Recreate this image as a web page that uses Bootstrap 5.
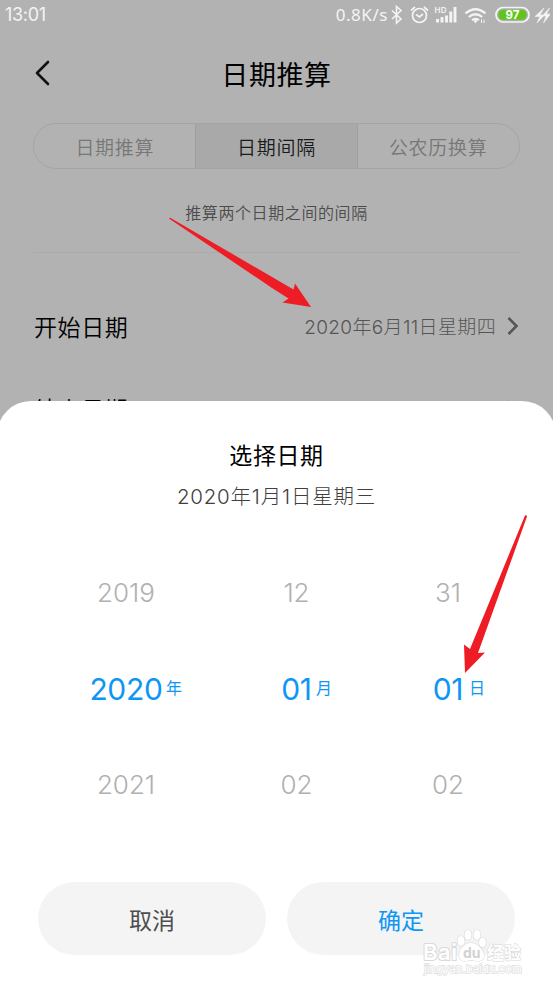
<!DOCTYPE html>
<html lang="zh-CN">
<head>
<meta charset="utf-8">
<meta name="viewport" content="width=device-width, initial-scale=1">
<title>日期推算</title>
<link href="https://cdn.jsdelivr.net/npm/bootstrap@5.3.0/dist/css/bootstrap.min.css" rel="stylesheet">
<style>
  body { font-family: Inter, "Noto Sans CJK SC", sans-serif; background: #b2b2b2; color: #000; }
  .screen { width: 553px; height: 989px; background: #b2b2b2; line-height: 1; }
  .screen svg { display: block; flex: none; }
  .status { height: 28px; padding: 1px 3px 0 5px; color: #f4f4f4; }
  .clock { font-size: 18px; letter-spacing: -.3px; }
  .speed { font: 17px/1 "Noto Sans", sans-serif; letter-spacing: .55px; }
  .topbar { height: 90px; padding: 3px 35px 0; }
  .topbar h1 { font-size: 27px; font-weight: 400; letter-spacing: .6px; padding-top: 3px; }
  .seg { height: 46px; margin: 5px 33px 0; border: 1px solid #a5a5a5; font-size: 19px; color: #777; letter-spacing: .7px; font-weight: 350; }
  .seg > div { padding-top: 4px; }
  .seg-on { background: #a9a9a9; color: #1a1a1a; box-shadow: -1px 0 #9f9f9f, 1px 0 #9f9f9f; }
  .hint { height: 84px; margin: 0 33px; border-bottom: 1px solid #ababab; font-size: 16px; font-weight: 350; color: #4c4c4c; letter-spacing: .6px; padding-top: 5px; }
  .date-row { height: 80px; padding: 0 34px; }
  .date-row-end { padding-top: 3px; }
  .date-label { font-size: 23px; letter-spacing: .6px; padding-top: 7px; font-weight: 350; }
  .date-value { font-size: 19px; font-weight: 300; color: #555; letter-spacing: .35px; padding-top: 4px; }
  .date-row-end .date-value { padding-top: 10px; }
  .date-row-end svg { margin-top: 4px; }
  .sheet { top: 401px; left: -3px; right: -3px; bottom: 0; border-radius: 34px 34px 0 0; background: #fff; overflow: hidden; padding: 0 3px; }
  .sheet-title { font-size: 23px; height: 26px; margin-top: 44px; letter-spacing: .6px; }
  .sheet-date { font-size: 20.5px; height: 26px; margin-top: 16px; font-weight: 300; color: #404040; letter-spacing: .8px; }
  .picker { height: 288px; margin-top: 32px; grid-template-columns: 194px 147px 156px; padding-left: 29px; }
  .cell { height: 96px; font-size: 26px; font-weight: 300; color: #b0b0b0; }
  .cell-on { font-size: 30px; font-weight: 400; color: #0d96f5; letter-spacing: -.3px; }
  .unit { font-size: 16px; font-weight: 400; top: 39px; letter-spacing: 0; }
  .u-y { left: 137px; }
  .u-m { left: 93px; }
  .u-d { left: 99px; }
  .actions { margin-top: 49px; padding: 0 38px; gap: 21px; }
  .pill { width: 228px; height: 73px; background: #f4f4f4; font-size: 23px; color: #4d4d4d; border: 0; padding-top: 6px; }
  .pill-ok { color: #0d96f5; }
  .over { left: 0; top: 0; }
</style>
<script src="https://cdn.jsdelivr.net/npm/bootstrap@5.3.0/dist/js/bootstrap.bundle.min.js"></script>
</head>
<body class="overflow-hidden">
<div class="screen position-relative overflow-hidden">
  <div class="status d-flex align-items-center justify-content-between">
    <span class="clock">13:01</span>
    <div class="d-flex align-items-center">
      <span class="speed">0.8K/s</span>
      <svg width="162" height="28" viewBox="389 0 162 28" fill="none" stroke="#f4f4f4">
        <path d="M393 9.500l9 8.500-4.500 4V5.500l4.500 4-9 8.500" stroke-width="1.600"/>
        <circle cx="420.500" cy="14.500" r="7" stroke-width="1.700"/>
        <path d="M417 13.500l3.500 2.500 3.500-3M412 9.500l4-3.500M429 9.500L425 6" stroke-width="1.700"/>
        <text x="435.500" y="11.500" font-size="8" font-weight="600" fill="#f4f4f4" stroke="none" textLength="12">HD</text>
        <path d="M438.500 21.500v-3.500M443 21.500v-5.500M447.500 21.500v-7M451.800 21.500V10.500M456 21.500V6" stroke-width="2.900"/>
        <path d="M466.500 12.500Q476.500 4 486.500 12.500M469.800 16Q476.500 10.500 483.200 16M473 19.200Q476.500 16.500 480 19.200" stroke-width="2.200"/>
        <path d="M474.500 20l2-1.500 2 1.500-2 2.300z" fill="#f4f4f4" stroke="none"/>
        <path d="M482.500 18.500v3.500M485 18.500v3.500" stroke-width="1"/>
        <rect x="497" y="6.500" width="33" height="14.500" rx="7.200" stroke-width="1.700"/>
        <rect x="499.500" y="8.800" width="28" height="10" rx="4.500" fill="#5fc51d" stroke="none"/>
        <text x="513.500" y="18" text-anchor="middle" font-size="11.500" font-weight="700" fill="#fff" stroke="none">97</text>
        <path d="M545 7l-9 8.500h5l-3 6.500 7.500-8h-4.500zM550.500 7l-7.500 8h4l-2.500 7 7-9h-4z" fill="#f4f4f4" stroke="#f4f4f4" stroke-width=".6"/>
      </svg>
    </div>
  </div>

  <div class="topbar d-flex align-items-center">
    <svg class="mb-1" width="16" height="26" viewBox="0 0 16 26" fill="none" stroke="#111" stroke-width="2.600" stroke-linecap="round" stroke-linejoin="round"><path d="M13 2L2 13l11 11"/></svg>
    <h1 class="m-0 flex-grow-1 text-center pe-3">日期推算</h1>
  </div>

  <div class="seg d-flex rounded-pill overflow-hidden">
    <div class="col-4 d-flex align-items-center justify-content-center">日期推算</div>
    <div class="seg-on col-4 d-flex align-items-center justify-content-center">日期间隔</div>
    <div class="col-4 d-flex align-items-center justify-content-center">公农历换算</div>
  </div>
  <div class="hint d-flex align-items-center justify-content-center">推算两个日期之间的间隔</div>

  <div class="pt-4 mt-2">
    <div class="date-row d-flex align-items-center justify-content-between">
      <span class="date-label">开始日期</span>
      <div class="d-flex align-items-center gap-2">
        <span class="date-value">2020年6月11日星期四</span>
        <svg width="15" height="20" viewBox="0 0 15 20" fill="none" stroke="#555" stroke-width="2.600"><path d="M4.500 3l8 8-8 8"/></svg>
      </div>
    </div>
    <div class="date-row date-row-end d-flex align-items-center justify-content-between">
      <span class="date-label">结束日期</span>
      <div class="d-flex align-items-center gap-2">
        <span class="date-value">2020年6月11日星期四</span>
        <svg width="15" height="20" viewBox="0 0 15 20" fill="none" stroke="#555" stroke-width="2.600"><path d="M3.500 2.500l8 8-8 8"/></svg>
      </div>
    </div>
  </div>

  <div class="sheet position-absolute d-flex flex-column">
    <div class="sheet-title text-center">选择日期</div>
    <div class="sheet-date text-center">2020年1月1日星期三</div>
    <div class="picker d-grid">
      <div>
        <div class="cell d-flex align-items-center justify-content-center">2019</div>
        <div class="cell cell-on d-flex align-items-center justify-content-center position-relative">2020<span class="unit position-absolute u-y">年</span></div>
        <div class="cell d-flex align-items-center justify-content-center">2021</div>
      </div>
      <div>
        <div class="cell d-flex align-items-center justify-content-center">12</div>
        <div class="cell cell-on d-flex align-items-center justify-content-center position-relative">01<span class="unit position-absolute u-m">月</span></div>
        <div class="cell d-flex align-items-center justify-content-center">02</div>
      </div>
      <div>
        <div class="cell d-flex align-items-center justify-content-center">31</div>
        <div class="cell cell-on d-flex align-items-center justify-content-center position-relative">01<span class="unit position-absolute u-d">日</span></div>
        <div class="cell d-flex align-items-center justify-content-center">02</div>
      </div>
    </div>
    <div class="actions d-flex">
      <button class="pill rounded-pill">取消</button>
      <button class="pill pill-ok rounded-pill">确定</button>
    </div>
  </div>

  <svg class="over position-absolute" width="553" height="989" viewBox="0 0 553 989">
    <g fill="#ee1c24">
      <path d="M169 218.500Q170 217 171.500 218.500L293.500 289.500 295 283.500 311 307 282.500 302.500 288.500 298.500 272 288Z"/>
      <path d="M525 515.500Q526.500 514.500 527 516.500L478 653 485 652.500 465 673 464 644.500 470 649Z"/>
    </g>
    <g stroke="#d9d9d9" fill="#fff" stroke-width="1.200" paint-order="stroke">
      <text x="423" y="960" font-size="22" font-weight="600" stroke-width="2" textLength="34">Bai</text>
      <ellipse cx="461" cy="941" rx="3.500" ry="5"/><ellipse cx="468" cy="935" rx="3.500" ry="5"/><ellipse cx="477" cy="935" rx="3.500" ry="5"/><ellipse cx="482.500" cy="942.500" rx="3.500" ry="5"/>
      <path d="M471 943C463 943 459 951 459 955C459 963 466 961 471 960C477 961 484 963 484 955C484 951 478 943 471 943Z"/>
      <text x="463" y="958" font-size="14" font-weight="700" fill="#d2d2d2" stroke="none">du</text>
      <text x="487" y="959" font-size="17" font-weight="700" textLength="34">经验</text>
      <text x="424" y="973" font-size="11" stroke="#dedede" stroke-width="1.300" textLength="98" lengthAdjust="spacingAndGlyphs">jingyan.baidu.com</text>
    </g>
  </svg>
</div>
</body>
</html>
